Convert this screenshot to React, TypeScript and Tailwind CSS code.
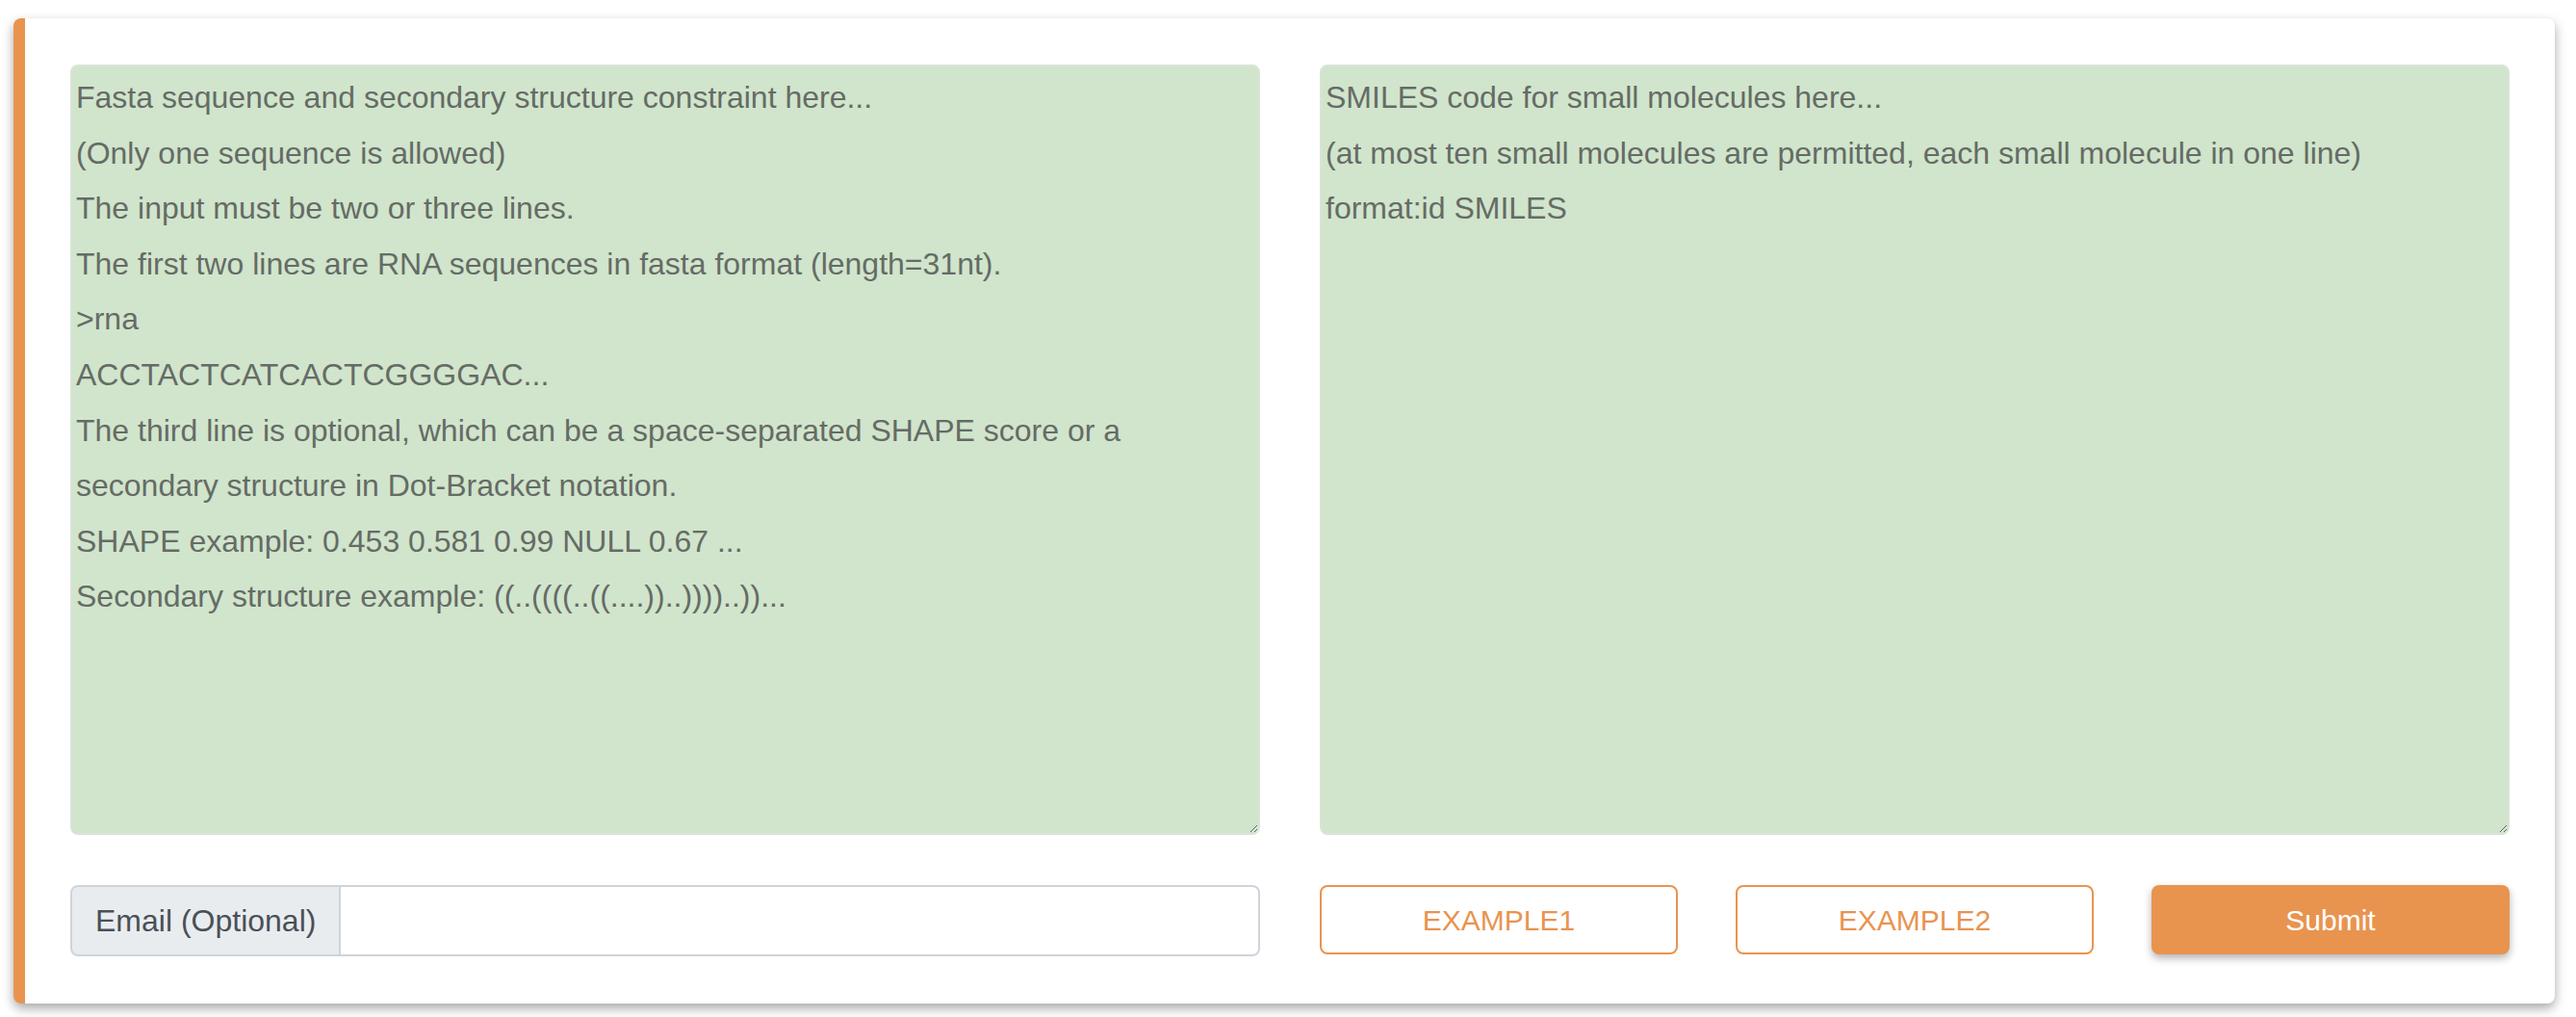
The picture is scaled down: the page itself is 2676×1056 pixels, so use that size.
import React from 'react';

const seqPlaceholder = [
  'Fasta sequence and secondary structure constraint here...',
  '(Only one sequence is allowed)',
  'The input must be two or three lines.',
  'The first two lines are RNA sequences in fasta format (length=31nt).',
  '>rna',
  'ACCTACTCATCACTCGGGGAC...',
  'The third line is optional, which can be a space-separated SHAPE score or a',
  'secondary structure in Dot-Bracket notation.',
  'SHAPE example: 0.453 0.581 0.99 NULL 0.67 ...',
  'Secondary structure example: ((..((((..((....))..))))..))...',
].join('\n');

const smilesPlaceholder = [
  'SMILES code for small molecules here...',
  '(at most ten small molecules are permitted, each small molecule in one line)',
  'format:id SMILES',
].join('\n');

const areaClass =
  "w-full h-[800px] block bg-[#d0e5cc] border-2 border-[#d9e4d7] rounded-[8px] px-[4px] py-[4px] text-[32px] leading-[57.6px] text-[#666b65] placeholder:text-[#666b65] font-['Liberation_Sans',Arial,sans-serif] outline-none";

const App: React.FC = () => {
  return (
    <div className="min-h-[1056px] bg-white pt-[19px] pl-[14px] pr-[22px] font-['Liberation_Sans',Arial,sans-serif]">
      <div className="bg-white rounded-[8px] border-l-[12px] border-[#e8944f] shadow-[0_5px_12px_rgba(0,0,0,0.35)] px-[47px] pt-[48px] pb-[49px]">
        <div className="grid grid-cols-2 gap-[62px]">
          <textarea className={areaClass} placeholder={seqPlaceholder} />
          <textarea className={areaClass} placeholder={smilesPlaceholder} />
        </div>

        <div className="grid grid-cols-2 gap-[62px] mt-[52px]">
          <div className="flex h-[74px]">
            <span className="shrink-0 whitespace-nowrap flex items-center px-[24px] bg-[#e9ecef] border-2 border-[#ced4da] rounded-l-[8px] text-[32px] text-[#495057]">
              Email (Optional)
            </span>
            <input
              type="text"
              className="flex-1 min-w-0 border-2 border-l-0 border-[#ced4da] rounded-r-[8px] px-[24px] text-[32px] text-[#495057] outline-none"
            />
          </div>

          <div className="flex justify-between">
            <button className="w-[372px] h-[72px] border-2 border-[#e8944f] rounded-[8px] text-[30px] text-[#e8944f] bg-white">
              EXAMPLE1
            </button>
            <button className="w-[372px] h-[72px] border-2 border-[#e8944f] rounded-[8px] text-[30px] text-[#e8944f] bg-white">
              EXAMPLE2
            </button>
            <button className="w-[372px] h-[72px] rounded-[8px] text-[30px] text-white bg-[#e8944f] shadow-[0_4px_8px_rgba(0,0,0,0.3)]">
              Submit
            </button>
          </div>
        </div>
      </div>
    </div>
  );
};

export default App;
